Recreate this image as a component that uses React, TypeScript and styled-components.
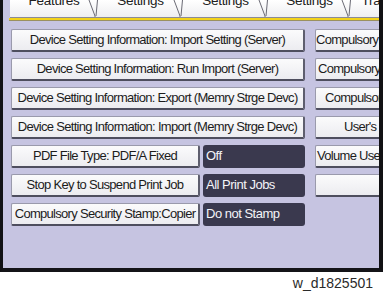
import React from "react";
import styled, { createGlobalStyle } from "styled-components";

const Global = createGlobalStyle`
  html, body { margin: 0; padding: 0; background: #ffffff; }
  body { width: 383px; height: 291px; overflow: hidden; }
`;

const FONT = `"Liberation Sans", Arial, sans-serif`;

const Page = styled.div`
  width: 383px;
  height: 291px;
  display: flex;
  flex-direction: column;
`;

const Screen = styled.div`
  width: 383px;
  height: 272px;
  box-sizing: border-box;
  background: #c6c4e1;
  border-left: 3px solid #111114;
  border-right: 4px solid #111114;
  border-bottom: 4px solid #141418;
  overflow: hidden;
  display: flex;
  flex-direction: column;
`;

const TabStrip = styled.div`
  height: 18px;
  display: flex;
  padding-left: 7px;
  box-sizing: border-box;
  overflow: hidden;
`;

const Tab = styled.div<{ $w: number }>`
  position: relative;
  flex: 0 0 ${(p) => p.$w}px;
  height: 18px;
  background: linear-gradient(#ffffff, #eeeef0);
  border-bottom: 1px solid #8a8a96;
  box-sizing: border-box;
  font-family: ${FONT};
  font-size: 13.5px;
  letter-spacing: -0.3px;
  color: #202020;
  text-align: center;
  line-height: 14px;
  overflow: hidden;
`;

const TabLabel = styled.span`
  display: block;
  margin-top: -6px;
`;

const TabEdge = styled.svg`
  position: absolute;
  right: 0;
  top: 0;
`;

const YellowBar = styled.div`
  height: 2px;
  margin-left: 6px;
  background: #f2d21a;
  border-bottom: 1px solid #9a9060;
`;

const Grid = styled.div`
  display: grid;
  grid-template-columns: 294px 120px;
  grid-auto-rows: 23px;
  column-gap: 10px;
  row-gap: 6px;
  padding: 8px 0 0 8px;
`;

const Split = styled.div`
  display: flex;
  gap: 3px;
`;

const Button = styled.div<{ $indent?: number; $w?: number }>`
  box-sizing: border-box;
  height: 23px;
  width: ${(p) => (p.$w ? `${p.$w}px` : "100%")};
  flex: 0 0 auto;
  background: linear-gradient(#fbfbfc, #ececf0);
  border: 1px solid #9a9aac;
  border-right: 2px solid #5e5e6e;
  border-bottom: 2px solid #4e4e5e;
  border-radius: 2px;
  font-family: ${FONT};
  font-size: 13px;
  letter-spacing: -0.7px;
  line-height: 20px;
  color: #1c1c1c;
  white-space: nowrap;
  overflow: hidden;
  display: flex;
  justify-content: ${(p) => (p.$indent !== undefined ? "flex-start" : "center")};
  padding-left: ${(p) => (p.$indent !== undefined ? `${p.$indent}px` : "0")};
`;

const Value = styled.div`
  box-sizing: border-box;
  flex: 1 1 auto;
  height: 23px;
  background: #3a394e;
  border-radius: 3px;
  color: #f4f4f8;
  font-family: ${FONT};
  font-size: 13px;
  letter-spacing: -0.5px;
  line-height: 22px;
  padding-left: 3px;
  white-space: nowrap;
`;

const Empty = styled.div``;

const Caption = styled.div`
  font-family: "Liberation Sans", Arial, sans-serif;
  font-size: 14px;
  color: #2a2a2a;
  text-align: right;
  padding: 3px 10px 0 0;
  line-height: 16px;
`;

const tabs = [
  { label: "Features", w: 88 },
  { label: "Settings", w: 85 },
  { label: "Settings", w: 85 },
  { label: "Settings", w: 83 },
  { label: "Tra", w: 40 },
];

type Row =
  | { kind: "full"; label: string }
  | { kind: "split"; label: string; value: string };

const left: Row[] = [
  { kind: "full", label: "Device Setting Information: Import Setting (Server)" },
  { kind: "full", label: "Device Setting Information: Run Import (Server)" },
  { kind: "full", label: "Device Setting Information: Export (Memry Strge Devc)" },
  { kind: "full", label: "Device Setting Information: Import (Memry Strge Devc)" },
  { kind: "split", label: "PDF File Type: PDF/A Fixed", value: "Off" },
  { kind: "split", label: "Stop Key to Suspend Print Job", value: "All Print Jobs" },
  { kind: "split", label: "Compulsory Security Stamp:Copier", value: "Do not Stamp" },
];

const right: ({ label: string; indent: number } | null)[] = [
  { label: "Compulsory Security Stamp", indent: 0 },
  { label: "Compulsory Security", indent: 2 },
  { label: "Compulsory", indent: 9 },
  { label: "User's Code", indent: 28 },
  { label: "Volume Use", indent: 1 },
  { label: "", indent: 0 },
  null,
];

export default function App() {
  return (
    <Page>
      <Global />
      <Screen>
        <TabStrip>
          {tabs.map((t, i) => (
            <Tab key={i} $w={t.w}>
              <TabLabel>{t.label}</TabLabel>
              {i < tabs.length - 1 && (
                <TabEdge width="10" height="18" viewBox="0 0 10 18">
                  <path d="M1 0 L7 16 L7 18" fill="none" stroke="#6a6a74" strokeWidth="1" />
                  <path d="M9.5 0 L8 16" fill="none" stroke="#6a6a74" strokeWidth="1" />
                </TabEdge>
              )}
            </Tab>
          ))}
        </TabStrip>
        <YellowBar />
        <Grid>
          {left.map((r, i) => (
            <React.Fragment key={i}>
              {r.kind === "full" ? (
                <Button>{r.label}</Button>
              ) : (
                <Split>
                  <Button $w={189}>{r.label}</Button>
                  <Value>{r.value}</Value>
                </Split>
              )}
              {right[i] ? (
                <Button $indent={right[i]!.indent}>{right[i]!.label}</Button>
              ) : (
                <Empty />
              )}
            </React.Fragment>
          ))}
        </Grid>
      </Screen>
      <Caption>w_d1825501</Caption>
    </Page>
  );
}
